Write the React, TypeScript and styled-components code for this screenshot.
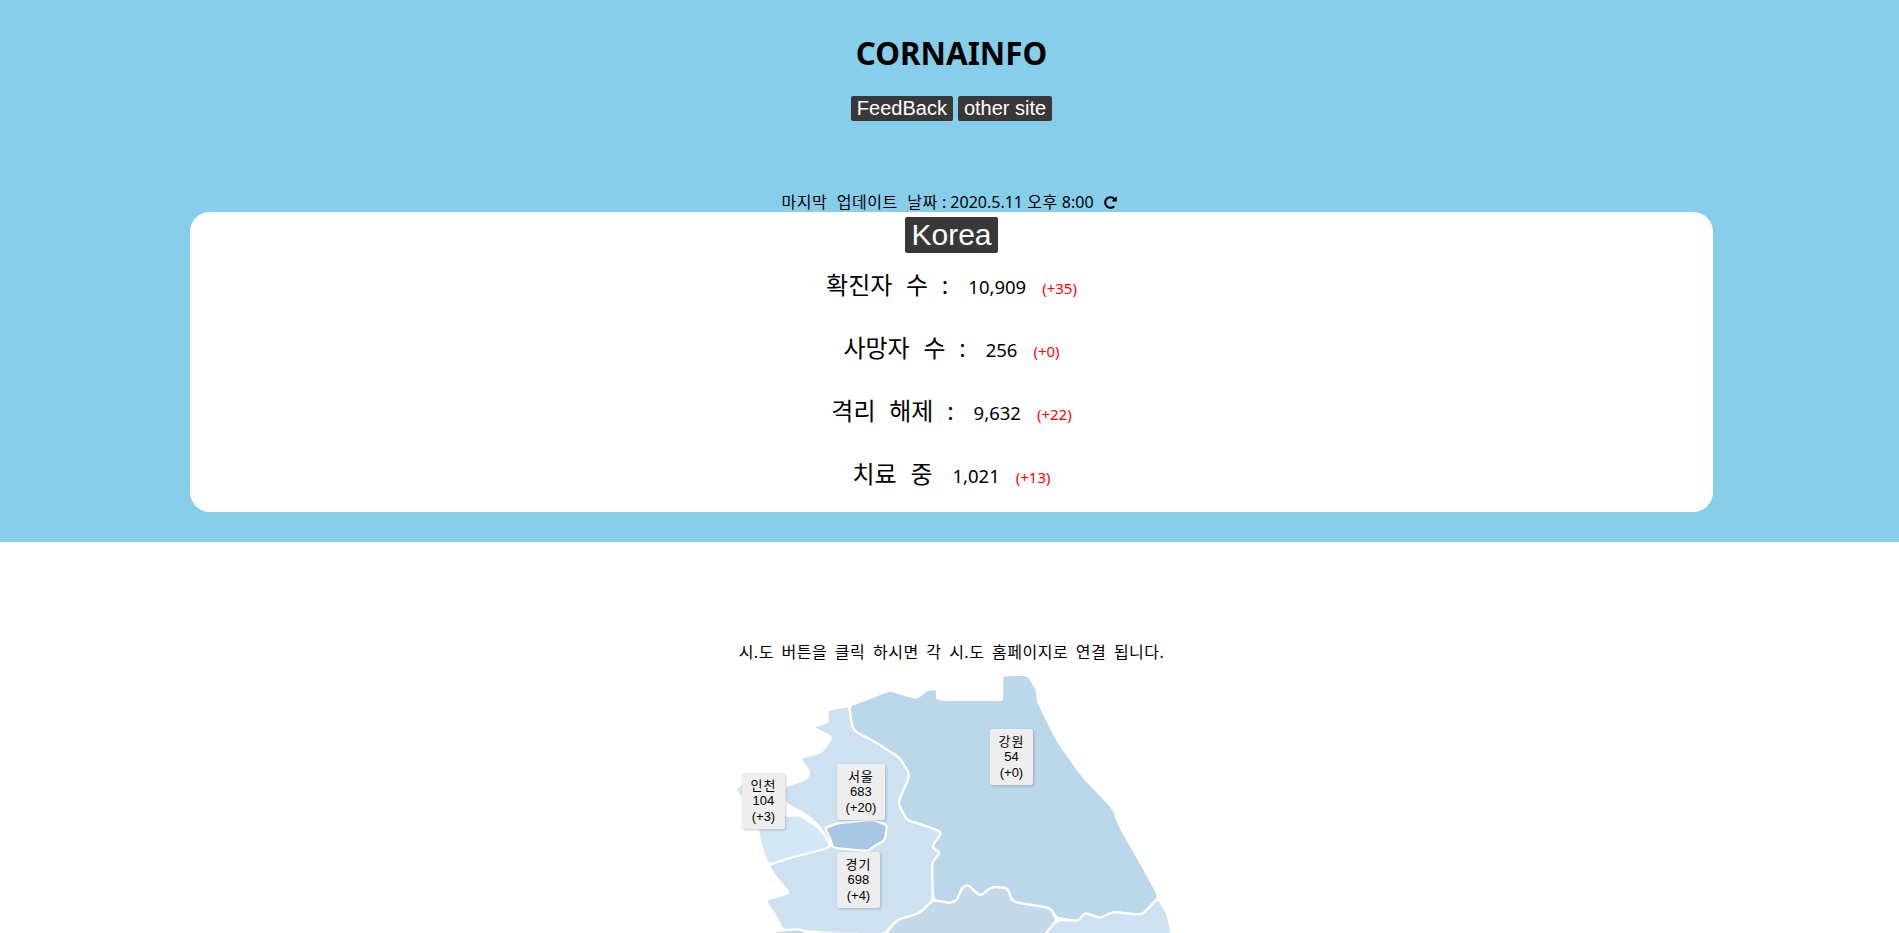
import React from 'react'
import styled, { createGlobalStyle } from 'styled-components'
import { FaRedoAlt } from 'react-icons/fa'

const KR = `"Noto Sans", "Noto Sans CJK KR", sans-serif`
const SANS = `"Liberation Sans", "Noto Sans CJK KR", sans-serif`

const GlobalStyle = createGlobalStyle`
    html, body {
        margin: 0;
        padding: 0;
        background: #fff;
        overflow: hidden;
    }
`

const Page = styled.div`
    width: 1903px;
    font-family: ${KR};
    color: #000;
`

const Top = styled.header`
    background: #87ceeb;
    padding: 31px 0 30px;
    text-align: center;
`

const Title = styled.h1`
    margin: 0;
    font-size: 31.3px;
    line-height: 44px;
    font-weight: 700;
`

const Links = styled.nav`
    display: flex;
    justify-content: center;
    gap: 5px;
    margin-top: 21px;
`

const Tag = styled.a<{ $big?: boolean }>`
    display: inline-block;
    padding: 1px 6px;
    background: #383838;
    border-radius: 2px;
    color: #fff;
    font-family: ${SANS};
    font-size: ${p => (p.$big ? '30px' : '20px')};
    line-height: ${p => (p.$big ? '34px' : '23px')};
`

const Updated = styled.div`
    display: flex;
    justify-content: center;
    align-items: center;
    gap: 10px;
    margin-top: 71px;
    padding-right: 5px;
    font-size: 16px;
    line-height: 20px;
`

const Hangul = styled.span`
    letter-spacing: 0.5px;
    word-spacing: 5px;
`

const Card = styled.section`
    width: 1523px;
    height: 300px;
    box-sizing: border-box;
    margin: 0 auto;
    padding-top: 5px;
    background: #fff;
    border-radius: 20px;
    text-align: center;
`

const Stat = styled.div`
    display: flex;
    justify-content: center;
    align-items: baseline;
    height: 63px;
    padding-top: 14px;
    box-sizing: border-box;
`

const StatLabel = styled.span`
    font-size: 24px;
    line-height: 36px;
    word-spacing: 7.5px;
`

const StatValue = styled.span`
    margin-left: 20px;
    font-size: 18.5px;
`

const StatDelta = styled.span`
    margin-left: 16px;
    font-size: 15px;
    color: #ff0000;
`

const Notice = styled.p`
    margin: 99px 0 0;
    font-size: 16px;
    line-height: 23px;
    text-align: center;
    letter-spacing: 0.5px;
    word-spacing: 3px;
`

const MapBox = styled.div`
    position: relative;
    width: 501px;
    height: 269px;
    margin: 0 auto;
    overflow: hidden;
`

const MapSvg = styled.svg`
    display: block;
    filter: blur(0.4px);
`

const Region = styled.path`
    stroke: #fff;
    stroke-width: 2.2;
    stroke-linejoin: round;
`

const Pin = styled.div<{ $x: number; $y: number }>`
    position: absolute;
    left: ${p => p.$x - 701}px;
    top: ${p => p.$y - 664}px;
    padding: 5px 8.5px;
    background: #eee;
    border-radius: 2px;
    box-shadow: 1px 1px 3px rgba(0, 0, 0, 0.2);
    font-family: ${SANS};
    font-size: 13px;
    line-height: 15.3px;
    text-align: center;
`

const PinEdge = styled(Pin)`
    width: 25px;
    height: 46px;
`

const PinName = styled.span`
    letter-spacing: 1px;
`

// softens the corners of a traced outline without pulling it away from the points
const smooth = (raw: string) => {
    const pts = raw.split(' ').map(p => p.split(',').map(Number))
    const toward = (a: number[], b: number[]) => {
        const t = 0.22
        return `${a[0] + (b[0] - a[0]) * t},${a[1] + (b[1] - a[1]) * t}`
    }
    return (
        pts
            .map((p, i) => {
                const prev = pts[(i + pts.length - 1) % pts.length]
                const next = pts[(i + 1) % pts.length]
                return `${i === 0 ? 'M' : 'L'}${toward(p, prev)} Q${p[0]},${p[1]} ${toward(p, next)}`
            })
            .join(' ') + 'Z'
    )
}

const regions = [
    {
        fill: '#cde1f0',
        points: '849,706 838,708 827,710 828,722 812,727 820,731 832,737 822,752 800,758 810,773 805,780 785,786 785,803 807,815 820,827 832,847 793,857 768,865 778,880 790,893 765,900 775,915 783,930 800,931 883,935 897,920 920,913 933,900 932,863 940,853 932,847 942,832 923,825 907,820 898,803 910,775 900,758 877,743 853,730',
    },
    {
        fill: '#d4e7f5',
        points: '735,790 742,783 760,790 785,816 800,815 820,829 832,847 793,857 768,865 760,843 758,827 743,800',
    },
    {
        fill: '#bbd7ea',
        points: '849,706 870,698 890,690 905,695 917,698 927,690 937,689 937,700 1000,700 1002,700 1002,677 1006,675 1028,675 1037,690 1038,702 1058,742 1083,777 1113,808 1120,827 1143,867 1157,893 1158,898 1142,915 1113,912 1100,918 1085,913 1078,921 1057,918 1050,908 1013,902 1007,888 992,887 980,896 968,885 962,888 957,900 950,903 933,900 932,863 940,853 932,847 942,832 923,825 907,820 898,803 910,775 900,758 877,743 853,730',
    },
    {
        fill: '#a9c7e2',
        points: '825,828 838,823 873,820 887,825 885,840 873,847 868,851 833,848 830,838',
    },
    {
        fill: '#c4daea',
        points: '933,900 950,903 957,900 962,888 968,885 980,896 992,887 1007,888 1013,902 1050,908 1057,920 1043,937 883,937 897,920 920,913',
    },
    {
        fill: '#cde1f0',
        points: '1158,898 1142,915 1113,912 1100,918 1085,913 1078,921 1057,920 1043,937 1172,937 1168,915',
    },
    {
        fill: '#c4daea',
        points: '775,931 800,929 815,937 775,937',
    },
]

const pins = [
    { name: '인천', total: '104', delta: '(+3)', x: 742, y: 773 },
    { name: '서울', total: '683', delta: '(+20)', x: 837, y: 764 },
    { name: '경기', total: '698', delta: '(+4)', x: 837, y: 852 },
    { name: '강원', total: '54', delta: '(+0)', x: 990, y: 729 },
]

const stats = [
    { label: '확진자 수 :', value: '10,909', delta: '(+35)' },
    { label: '사망자 수 :', value: '256', delta: '(+0)' },
    { label: '격리 해제 :', value: '9,632', delta: '(+22)' },
    { label: '치료 중', value: '1,021', delta: '(+13)' },
]

const App: React.FC = () => {
    return (
        <Page>
            <GlobalStyle />
            <Top>
                <Title>CORNAINFO</Title>
                <Links>
                    <Tag>FeedBack</Tag>
                    <Tag>other site</Tag>
                </Links>
                <Updated>
                    <span>
                        <Hangul>마지막 업데이트 날짜</Hangul> : 2020.5.11 <Hangul>오후</Hangul> 8:00
                    </span>
                    <FaRedoAlt size={13} />
                </Updated>
                <Card>
                    <Tag $big>Korea</Tag>
                    {stats.map(s => (
                        <Stat key={s.label}>
                            <StatLabel>{s.label}</StatLabel>
                            <StatValue>{s.value}</StatValue>
                            <StatDelta>{s.delta}</StatDelta>
                        </Stat>
                    ))}
                </Card>
            </Top>
            <Notice>시.도 버튼을 클릭 하시면 각 시.도 홈페이지로 연결 됩니다.</Notice>
            <MapBox>
                <MapSvg width="501" height="269" viewBox="701 664 501 269">
                    {regions.map(r => (
                        <Region key={r.points} fill={r.fill} d={smooth(r.points)} />
                    ))}
                </MapSvg>
                {pins.map(p => (
                    <Pin key={p.name} $x={p.x} $y={p.y}>
                        <PinName>{p.name}</PinName>
                        <br />
                        {p.total}
                        <br />
                        {p.delta}
                    </Pin>
                ))}
                <PinEdge $x={818} $y={932} />
            </MapBox>
        </Page>
    )
}

export default App
